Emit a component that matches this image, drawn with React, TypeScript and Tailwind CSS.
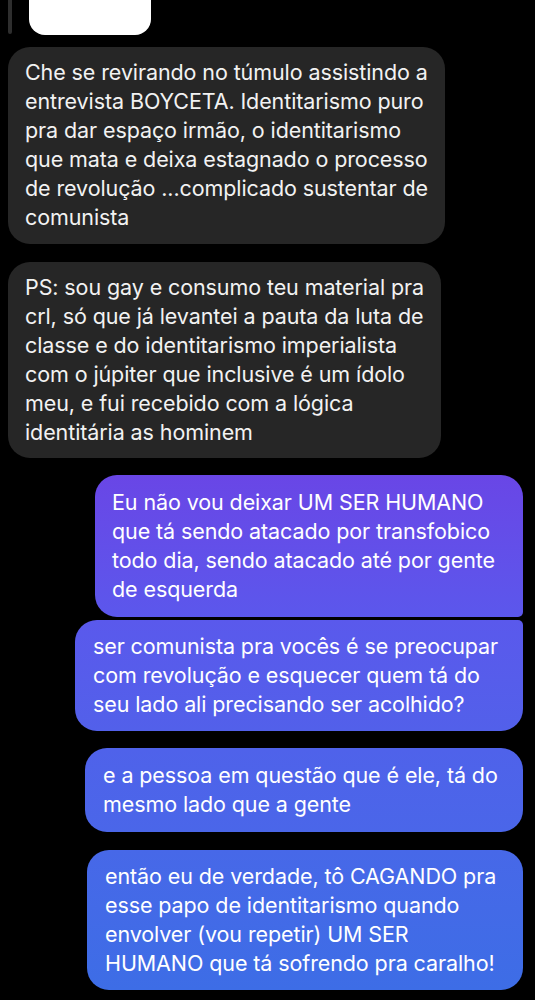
import React from "react";

type Msg = {
  lines: string[];
  mine: boolean;
  width: string;
  className: string;
};

const messages: Msg[] = [
  {
    mine: false,
    width: "w-[437px]",
    className: "mt-[12px] rounded-[22px] pt-[11px] pb-[12px] px-[17px]",
    lines: [
      "Che se revirando no túmulo assistindo a",
      "entrevista BOYCETA. Identitarismo puro",
      "pra dar espaço irmão, o identitarismo",
      "que mata e deixa estagnado o processo",
      "de revolução ...complicado sustentar de",
      "comunista",
    ],
  },
  {
    mine: false,
    width: "w-[433px]",
    className: "mt-[18px] rounded-[22px] pt-[11px] pb-[11px] px-[17px]",
    lines: [
      "PS: sou gay e consumo teu material pra",
      "crl, só que já levantei a pauta da luta de",
      "classe e do identitarismo imperialista",
      "com o júpiter que inclusive é um ídolo",
      "meu, e fui recebido com a lógica",
      "identitária as hominem",
    ],
  },
  {
    mine: true,
    width: "w-[428px]",
    className:
      "mt-[17px] rounded-[22px] rounded-br-[5px] pt-[13px] pb-[13px] px-[17px] bg-gradient-to-b from-[#6946e6] to-[#5b57ec]",
    lines: [
      "Eu não vou deixar UM SER HUMANO",
      "que tá sendo atacado por transfobico",
      "todo dia, sendo atacado até por gente",
      "de esquerda",
    ],
  },
  {
    mine: true,
    width: "w-[448px]",
    className:
      "mt-[3px] rounded-[22px] rounded-tr-[5px] pt-[12px] pb-[12px] px-[18px] bg-gradient-to-b from-[#5a59ec] to-[#5260ea]",
    lines: [
      "ser comunista pra vocês é se preocupar",
      "com revolução e esquecer quem tá do",
      "seu lado ali precisando ser acolhido?",
    ],
  },
  {
    mine: true,
    width: "w-[438px]",
    className:
      "mt-[17px] rounded-[22px] pt-[13px] pb-[13px] px-[18px] bg-gradient-to-b from-[#4f62ea] to-[#4a66e9]",
    lines: ["e a pessoa em questão que é ele, tá do", "mesmo lado que a gente"],
  },
  {
    mine: true,
    width: "w-[436px]",
    className:
      "mt-[18px] rounded-[22px] pt-[12px] pb-[12px] px-[18px] bg-gradient-to-b from-[#4768e8] to-[#3d6de6]",
    lines: [
      "então eu de verdade, tô CAGANDO pra",
      "esse papo de identitarismo quando",
      "envolver (vou repetir) UM SER",
      "HUMANO que tá sofrendo pra caralho!",
    ],
  },
];

function Bubble({ msg }: { msg: Msg }) {
  return (
    <div
      className={`${msg.width} ${msg.className} ${
        msg.mine ? "self-end text-white" : "self-start bg-[#262626] text-[#f2f2f2]"
      }`}
    >
      {msg.lines.map((line, i) => (
        <div key={i} className="h-[29px] leading-[29px] whitespace-nowrap">
          {line}
        </div>
      ))}
    </div>
  );
}

export default function App() {
  return (
    <div
      className="min-h-screen w-full bg-black pr-[12px] pl-[8px] flex flex-col text-[21.5px] tracking-[-0.1px]"
      style={{ fontFamily: "Inter, 'Noto Sans', sans-serif" }}
    >
      {/* replied-to media, cut off at the top */}
      <div className="flex items-start gap-[17px]">
        <div className="w-[4px] h-[34px] rounded-b-full bg-[#2e2e2e]" />
        <div className="w-[122px] h-[35px] rounded-b-[16px] bg-white" />
      </div>

      {messages.map((m, i) => (
        <Bubble key={i} msg={m} />
      ))}
    </div>
  );
}
